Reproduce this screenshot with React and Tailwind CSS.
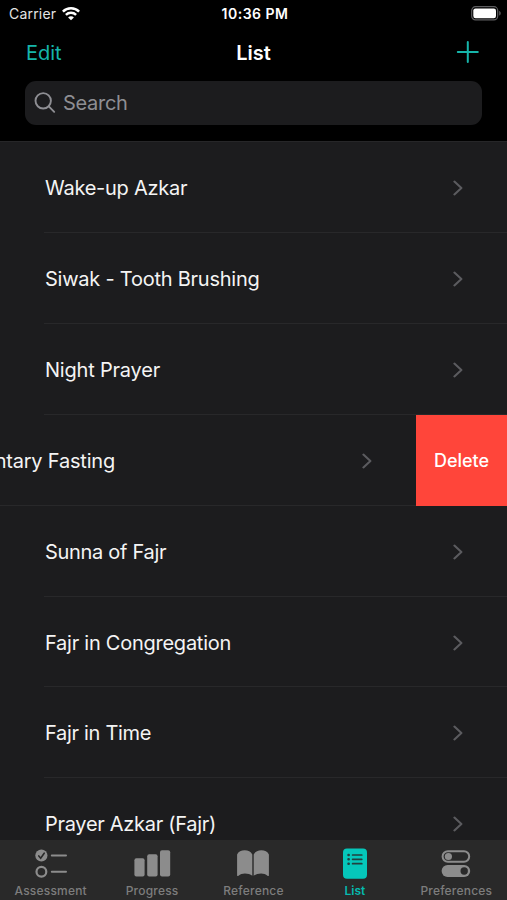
const items = [
  { id: 1, title: 'Wake-up Azkar', spacing: 'tracking-[-0.26px]' },
  { id: 2, title: 'Siwak - Tooth Brushing', spacing: 'tracking-[-0.24px]' },
  { id: 3, title: 'Night Prayer', spacing: 'tracking-[-0.2px]' },
  { id: 4, title: 'Voluntary Fasting', spacing: 'tracking-[-0.2px]', swiped: true },
  { id: 5, title: 'Sunna of Fajr', spacing: 'tracking-[-0.3px]' },
  { id: 6, title: 'Fajr in Congregation', spacing: 'tracking-[-0.25px]' },
  { id: 7, title: 'Fajr in Time', spacing: 'tracking-[-0.3px]' },
  { id: 8, title: 'Prayer Azkar (Fajr)', spacing: 'tracking-[-0.3px]' },
];

// ===== Status bar icons =====
function WifiIcon() {
  return (
    <svg width="18" height="14" viewBox="0 0 18 14" fill="none" stroke="#fff" strokeWidth="2.5">
      <path d="M.9 4.6a11.6 11.6 0 0 1 16.2 0" />
      <path d="M3.9 7.9a7.3 7.3 0 0 1 10.2 0" />
      <path d="M9 13.3 6.1 10.4a4 4 0 0 1 5.8 0z" fill="#fff" stroke="none" />
    </svg>
  );
}

function BatteryIcon() {
  return (
    <svg width="30" height="15" viewBox="0 0 30 15">
      <rect x=".7" y=".7" width="26" height="13.2" rx="3.8" fill="none" stroke="#5e5e60" strokeWidth="1.2" />
      <rect x="2.3" y="2.4" width="22.7" height="9.8" rx="2.2" fill="#fff" />
      <path d="M28.2 5v4.6c1-.4 1.5-1.2 1.5-2.3s-.5-1.9-1.5-2.3z" fill="#5e5e60" />
    </svg>
  );
}

function Chevron() {
  return (
    <svg className="shrink-0" width="10" height="16" viewBox="0 0 10 16" fill="none" stroke="#5b5b5f" strokeWidth="2.1" strokeLinecap="round" strokeLinejoin="round">
      <path d="m1.4 1.6 7 6.4-7 6.4" />
    </svg>
  );
}

// ===== Tab icons =====
function AssessmentIcon() {
  return (
    <svg width="34" height="30" viewBox="0 0 34 30" fill="none" strokeLinecap="round">
      <circle cx="7.4" cy="6.5" r="6.1" fill="#8c8c8c" />
      <path d="m4.8 6.9 1.9 2.3 3.5-5" stroke="#292929" strokeWidth="1.6" />
      <circle cx="7.4" cy="22.7" r="4.9" stroke="#8c8c8c" strokeWidth="2.2" />
      <path d="M17.8 6.5H32M17.8 22.7H32" stroke="#8c8c8c" strokeWidth="2" />
    </svg>
  );
}

function ProgressIcon() {
  return (
    <svg width="38" height="28" viewBox="0 0 38 28" fill="#8c8c8c">
      <rect x="1.4" y="8.2" width="10.2" height="18.4" rx="2" />
      <rect x="14.2" y="4.2" width="10.4" height="22.4" rx="2" />
      <rect x="27" y=".2" width="10.2" height="26.4" rx="2" />
    </svg>
  );
}

function ReferenceIcon() {
  return (
    <svg width="34" height="28" viewBox="0 0 34 28" fill="#8c8c8c">
      <path d="M1.1 4.4C2.4 1.8 5.3.3 8.7.3s6.2 1.5 7.6 4.1v21.4c-1.9-1.5-4.6-2.3-7.4-2.3-2.5 0-4.6.7-6.4 2.3-.7.6-1.4.3-1.4-.6z" />
      <path d="M32.9 4.4C31.6 1.8 28.7.3 25.3.3s-6.2 1.5-7.6 4.1v21.4c1.9-1.5 4.6-2.3 7.4-2.3 2.5 0 4.6.7 6.4 2.3.7.6 1.4.3 1.4-.6z" />
    </svg>
  );
}

function ListIcon() {
  return (
    <svg width="24" height="32" viewBox="0 0 24 32">
      <rect x="0" y=".4" width="24" height="30.4" rx="4" fill="#05c7ba" />
      <g stroke="#22403e" strokeWidth="1.7" strokeLinecap="round">
        <path d="M9.6 7h9.2M9.6 11.3h9.2M9.6 15.7h9.2" />
        <path d="M5.5 7h.2M5.5 11.3h.2M5.5 15.7h.2" strokeWidth="2.5" />
      </g>
    </svg>
  );
}

function PreferencesIcon() {
  return (
    <svg width="30" height="28" viewBox="0 0 30 28">
      <rect x="1.6" y="1.3" width="26.6" height="10.4" rx="5.2" fill="none" stroke="#8c8c8c" strokeWidth="2" />
      <circle cx="7.4" cy="6.5" r="3.6" fill="#8c8c8c" />
      <rect x=".6" y="15" width="28.6" height="12" rx="6" fill="#8c8c8c" />
      <circle cx="23.2" cy="21" r="3.7" fill="#292929" />
    </svg>
  );
}

const tabs = [
  { name: 'Assessment', icon: AssessmentIcon },
  { name: 'Progress', icon: ProgressIcon },
  { name: 'Reference', icon: ReferenceIcon },
  { name: 'List', icon: ListIcon, active: true },
  { name: 'Preferences', icon: PreferencesIcon },
];

function Row({ item }) {
  return (
    <div className="flex h-[90.85px] shrink-0">
      <div className={item.swiped ? 'w-full shrink-0 -ml-[91px] pl-[44px]' : 'w-full shrink-0 pl-[44px]'}>
        <div className="flex h-full items-center justify-between border-b border-[#28282a] pl-px pr-[44px] pt-[2px]">
          <span className={`whitespace-nowrap text-[20px] text-[#f4f4f4] ${item.spacing}`}>{item.title}</span>
          <Chevron />
        </div>
      </div>
      {item.swiped && (
        <button className="w-[91px] shrink-0 bg-[#ff453a] pt-px text-[18px] font-medium text-white">Delete</button>
      )}
    </div>
  );
}

export default function App() {
  return (
    <div className="flex h-[900px] w-[507px] flex-col overflow-hidden bg-[#1c1c1e] font-['Inter',sans-serif]">
      {/* Header */}
      <header className="h-[142.4px] shrink-0 border-b border-[#262628] bg-black">
        <div className="grid h-[27px] grid-cols-3 items-center pl-[9px] pr-[6px] text-white">
          <div className="flex items-center gap-[6px]">
            <span className="text-[14px] tracking-[0.2px] text-[#e4e4e4]">Carrier</span>
            <WifiIcon />
          </div>
          <span className="text-center text-[14px] font-semibold tracking-[0.5px]">10:36 PM</span>
          <div className="flex justify-end"><BatteryIcon /></div>
        </div>
        <div className="grid h-[50px] grid-cols-3 items-center px-[26px] pt-px">
          <button className="text-left text-[20px] text-[#16b5aa]">Edit</button>
          <h1 className="text-center text-[20px] font-semibold text-white">List</h1>
          <button className="flex justify-end pr-[2px]">
            <svg width="23" height="23" viewBox="0 0 23 23" stroke="#16b5aa" strokeWidth="2" strokeLinecap="round">
              <path d="M11.8 1v20M1.8 11h20" />
            </svg>
          </button>
        </div>
        <div className="mx-[25px] mt-[4px] flex h-[43.5px] items-center gap-[7px] rounded-[11px] bg-[#1c1c1e] pl-[9px]">
          <svg width="22" height="22" viewBox="0 0 22 22" fill="none" stroke="#8e8e93" strokeWidth="1.9" strokeLinecap="round">
            <circle cx="9.2" cy="8.8" r="7.7" />
            <path d="m14.8 14.4 5.4 5.4" />
          </svg>
          <span className="text-[20px] tracking-[-0.3px] text-[#8e8e93]">Search</span>
        </div>
      </header>

      {/* List */}
      <main className="flex min-h-0 flex-1 flex-col overflow-hidden">
        {items.map((item) => <Row key={item.id} item={item} />)}
      </main>

      {/* Tab bar */}
      <nav className="grid h-[60px] shrink-0 grid-cols-5 bg-[#292929]">
        {tabs.map((tab) => (
          <div key={tab.name} className="flex flex-col items-center pt-[7px]">
            <div className="flex h-[33px] items-center justify-center"><tab.icon /></div>
            <span className={tab.active ? 'mt-[3px] text-[12px] leading-4 font-semibold text-[#05b9ae]' : 'mt-[3px] text-[12px] leading-4 font-medium tracking-[0.2px] text-[#7d7d7d]'}>
              {tab.name}
            </span>
          </div>
        ))}
      </nav>
    </div>
  );
}
